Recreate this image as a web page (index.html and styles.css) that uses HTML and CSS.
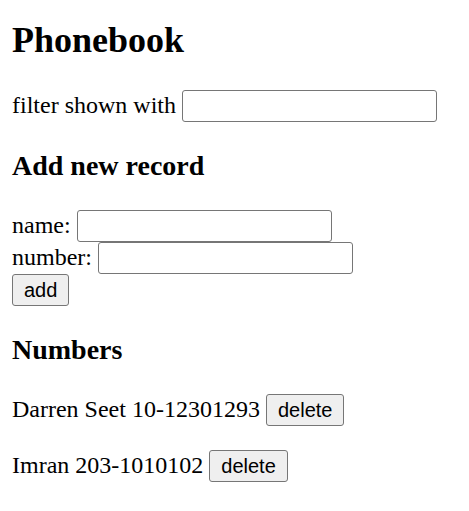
FILE: index.html
```html
<!DOCTYPE html>
<html lang="en">
<head>
<meta charset="utf-8">
<title>Phonebook</title>
<link rel="stylesheet" href="styles.css">
</head>
<body>
<div class="app">
  <h2 class="title">Phonebook</h2>
  <div class="filter">filter shown with <input class="field" type="text"></div>
  <h3 class="section-title">Add new record</h3>
  <form class="record-form">
    <div class="form-row">name: <input class="field" type="text"></div>
    <div class="form-row">number: <input class="field" type="text"></div>
    <div class="form-row"><button class="btn" type="submit">add</button></div>
  </form>
  <h3 class="section-title">Numbers</h3>
  <p class="person">Darren Seet 10-12301293 <button class="btn" type="button">delete</button></p>
  <p class="person">Imran 203-1010102 <button class="btn" type="button">delete</button></p>
</div>
</body>
</html>
```

FILE: styles.css
```css
html, body {
  background: #ffffff;
}

body {
  margin: 0;
  padding: 0 12px;
  font-family: "Liberation Serif", "Times New Roman", serif;
  font-size: 24px;
  color: #000000;
}

.title {
  font-size: 36px;
  font-weight: bold;
  line-height: normal;
  margin: 19px 0 29px;
}

.filter,
.form-row {
  line-height: normal;
}

.section-title {
  font-size: 28px;
  font-weight: bold;
  line-height: normal;
  margin: 28px 0;
}

.record-form {
  margin: 0;
}

.person {
  margin: 24px 0;
  line-height: normal;
}

.field {
  box-sizing: border-box;
  width: 255px;
  height: 32px;
  margin: 0;
  padding: 3.5px 4px;
  border: 1px solid #767676;
  border-radius: 3px;
  background: #ffffff;
  font-family: "Liberation Sans", Arial, sans-serif;
  font-size: 20px;
  line-height: normal;
  vertical-align: baseline;
}

.btn {
  box-sizing: border-box;
  height: 32px;
  margin: 0;
  padding: 3.5px 11px;
  border: 1px solid #767676;
  border-radius: 3px;
  background: #efefef;
  color: #000000;
  font-family: "Liberation Sans", Arial, sans-serif;
  font-size: 20px;
  line-height: normal;
  vertical-align: baseline;
}
```
